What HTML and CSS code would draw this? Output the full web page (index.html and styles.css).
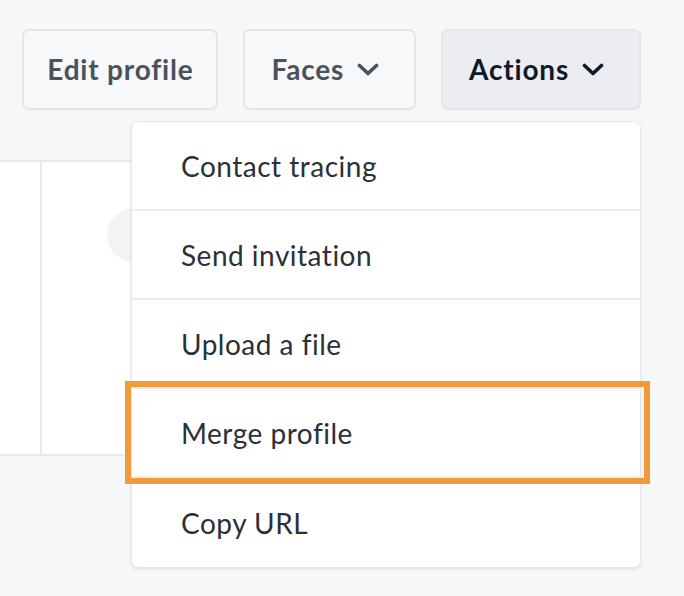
FILE: index.html
```html
<!DOCTYPE html>
<html>
<head>
<meta charset="utf-8">
<link rel="stylesheet" href="styles.css">
</head>
<body>
<div class="toolbar">
  <button class="btn">Edit profile</button>
  <button class="btn btn-drop">Faces
    <svg class="chev" viewBox="0 0 22 13"><polyline points="2.5,2.5 11,10.5 19.5,2.5"/></svg>
  </button>
  <div class="actions">
    <button class="btn btn-drop btn-active">Actions
      <svg class="chev" viewBox="0 0 22 13"><polyline points="2.5,2.5 11,10.5 19.5,2.5"/></svg>
    </button>
    <ul class="menu">
      <li class="item">Contact tracing</li>
      <li class="item">Send invitation</li>
      <li class="item">Upload a file</li>
      <li class="item item-marked">Merge profile</li>
      <li class="item item-last">Copy URL</li>
    </ul>
  </div>
</div>
<div class="card">
  <div class="card-side"></div>
  <div class="card-main"><div class="avatar"></div></div>
</div>
</body>
</html>
```
FILE: styles.css
```css
html, body {
  margin: 0;
  padding: 0;
  background: #f6f7f9;
  font-family: "Lato", "Liberation Sans", sans-serif;
}
body {
  min-height: 596px;
}
.toolbar {
  display: flex;
  justify-content: flex-end;
  gap: 25px;
  padding: 29px 43px 0 0;
  position: relative;
  z-index: 2;
}
.btn {
  box-sizing: border-box;
  height: 81px;
  padding: 0 23px 2px 23px;
  border: 2px solid #e3e5e8;
  border-radius: 7px;
  background: #f7f8fa;
  color: #4b525a;
  font-family: "Lato", "Liberation Sans", sans-serif;
  font-weight: 700;
  font-size: 28px;
  letter-spacing: 0.8px;
  display: flex;
  align-items: center;
  gap: 13px;
}
.btn-drop {
  padding-left: 26px;
  padding-right: 35px;
}
.btn-active {
  background: #ecedf0;
  color: #111a2b;
}
.chev {
  width: 22px;
  height: 13px;
  fill: none;
  stroke: currentColor;
  stroke-width: 3.6;
  stroke-linecap: round;
  stroke-linejoin: round;
  margin-top: 2px;
}
.actions {
  position: relative;
}
.menu {
  position: absolute;
  top: 92px;
  right: 0;
  width: 510px;
  box-sizing: border-box;
  margin: 0;
  padding: 0;
  list-style: none;
  background: #fff;
  border: 1px solid #e6e7ea;
  border-radius: 7px;
  box-shadow: 0 2px 3px rgba(0, 0, 0, 0.07), -1px 0 2px rgba(0, 0, 0, 0.03);
}
.item {
  height: 87px;
  border-bottom: 2px solid #ebecee;
  padding-left: 49px;
  display: flex;
  align-items: center;
  font-size: 28px;
  color: #2c3037;
  letter-spacing: 0.5px;
  position: relative;
}
.item-last {
  border-bottom: none;
  height: 89px;
}
.item-marked::after {
  content: "";
  position: absolute;
  left: -7px;
  right: -10px;
  top: -8px;
  bottom: -8px;
  border: 6px solid #f29a38;
  pointer-events: none;
}
.card {
  margin-top: 50px;
  width: 600px;
  height: 292px;
  background: #fff;
  border-top: 2px solid #e9eaec;
  border-bottom: 2px solid #e9eaec;
  display: flex;
}
.card-side {
  width: 40px;
  border-right: 2px solid #e9eaec;
}
.card-main {
  flex: 1;
  padding: 46px 0 0 65px;
}
.avatar {
  width: 54px;
  height: 54px;
  border-radius: 50%;
  background: #f3f3f4;
}
```
